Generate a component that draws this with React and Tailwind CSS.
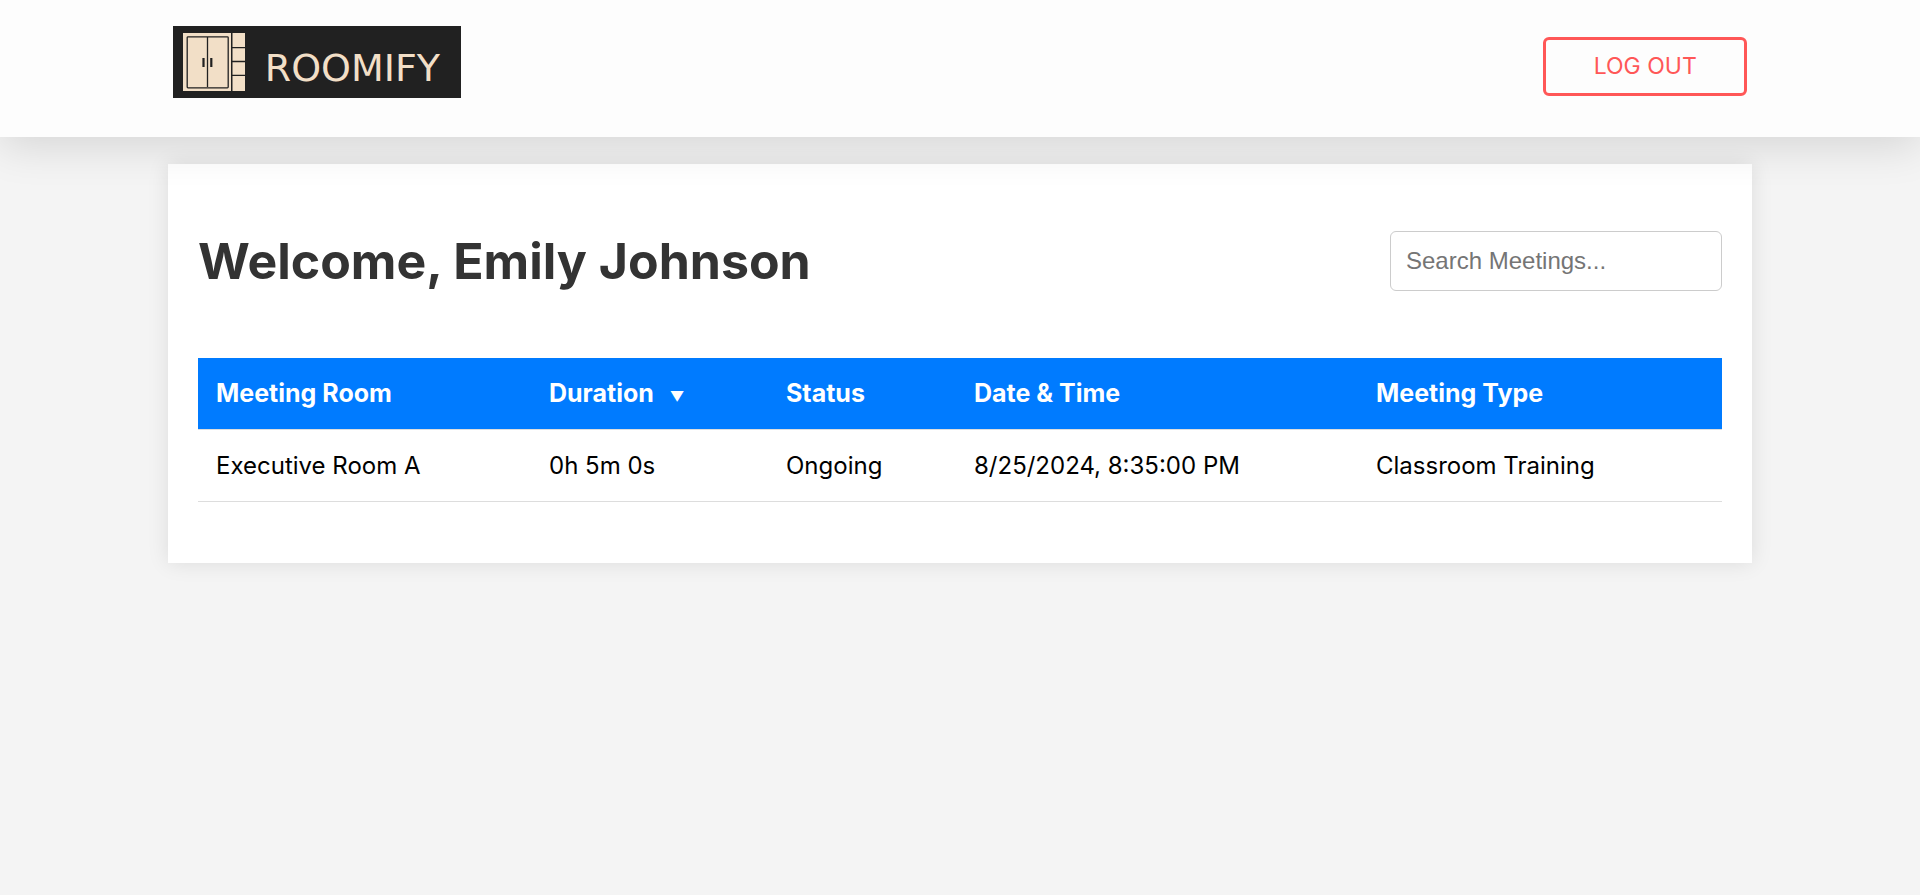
import React from "react";

const columns = ["Meeting Room", "Duration", "Status", "Date & Time", "Meeting Type"];

const meetings = [
  ["Executive Room A", "0h 5m 0s", "Ongoing", "8/25/2024, 8:35:00 PM", "Classroom Training"],
];

function Logo() {
  return (
    <a href="#" aria-label="Roomify" className="flex h-[72px] w-72 items-center bg-[#212121] text-[#f2dfc7]">
      <svg viewBox="0 0 84 72" className="h-[72px] w-[84px] shrink-0" aria-hidden="true">
        <path fill="#f2dfc7" d="M10 7h48v58H10zM59.500 7H72v58H59.500z" />
        <rect x="14.200" y="10.800" width="41" height="51" rx="0.800" fill="none" stroke="#212121" strokeWidth="1.300" />
        <path stroke="#212121" strokeWidth="1.300" d="M34.500 11v50M59 21.700h13M59 35.500h13M59 49.300h13" />
        <path stroke="#212121" strokeWidth="2.200" d="M30.500 32v9M38.300 32v9" />
      </svg>
      <span className="pt-3 pl-2 font-['DejaVu_Sans',sans-serif] text-[38px] leading-none">ROOMIFY</span>
    </a>
  );
}

export default function App() {
  return (
    <div className="min-h-screen bg-[#f4f4f4] font-[Inter,sans-serif] text-2xl leading-[35px] text-black">
      <header className="relative z-10 flex items-center justify-between bg-[#fdfdfd] px-[9%] pt-[26px] pb-[30px] shadow-[0_10px_40px_rgba(0,0,0,0.12)]">
        <div className="pb-[9px]">
          <Logo />
        </div>
        <button
          type="button"
          className="h-[59px] w-[204px] rounded-md border-3 border-[#ff5757] text-[23px] text-[#ff5757]"
        >
          LOG OUT
        </button>
      </header>

      <main className="mx-auto mt-[27px] w-[82.5%] bg-white px-[30px] py-[61px] shadow-[0_0_20px_rgba(0,0,0,0.1)]">
        <div className="mb-[61px] flex items-center justify-between">
          <h1 className="text-[50px] leading-[72px] font-bold text-[#333]">Welcome, Emily Johnson</h1>
          <input
            type="search"
            aria-label="Search meetings"
            placeholder="Search Meetings..."
            className="h-[60px] w-[332px] rounded-md border border-[#ccc] px-[15px] font-['Liberation_Sans',sans-serif] placeholder:text-[#757575]"
          />
        </div>
        <table className="w-full table-fixed border-collapse text-left">
          <colgroup>
            <col className="w-[333px]" />
            <col className="w-[237px]" />
            <col className="w-[188px]" />
            <col className="w-[402px]" />
            <col className="w-[364px]" />
          </colgroup>
          <thead className="bg-[#007bff] text-[25px] text-white">
            <tr>
              {columns.map((name) => (
                <th key={name} scope="col" className="border-b border-[#ddd] px-[18px] py-[18px] font-bold">
                  {name === "Duration" ? (
                    <button type="button" className="flex items-baseline gap-4">
                      Duration <span className="text-sm leading-none">▼</span>
                    </button>
                  ) : (
                    name
                  )}
                </th>
              ))}
            </tr>
          </thead>
          <tbody>
            {meetings.map((row) => (
              <tr key={row[0]}>
                {row.map((cell) => (
                  <td key={cell} className="border-b border-[#ddd] px-[18px] py-[18px]">
                    {cell}
                  </td>
                ))}
              </tr>
            ))}
          </tbody>
        </table>
      </main>
    </div>
  );
}
